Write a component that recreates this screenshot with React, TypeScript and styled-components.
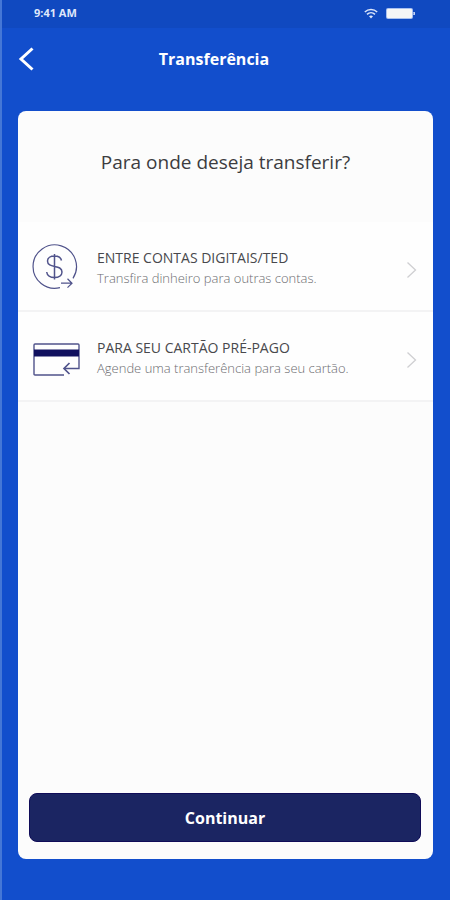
import React from "react";
import styled, { createGlobalStyle } from "styled-components";

const GlobalStyle = createGlobalStyle`
  * { box-sizing: border-box; }
  body { margin: 0; background: #124ecc; }
  button { font-family: inherit; }
`;

const Screen = styled.div`
  min-height: 100vh;
  display: flex;
  flex-direction: column;
  background: #124ecc;
  border-left: 2px solid #4577d6;
  font-family: "Open Sans", "Noto Sans", sans-serif;
`;

const StatusBar = styled.div`
  height: 28px;
  padding: 0 35px 2px 32px;
  display: flex;
  align-items: center;
  justify-content: space-between;
  background: #1049c0;
  color: #dfe7fa;
  font-size: 11px;
  font-weight: 700;
  line-height: 16px;
`;

const StatusIcons = styled.div`
  display: flex;
  align-items: center;
  gap: 8px;
`;

const Header = styled.header`
  height: 62px;
  padding: 0 16px;
  display: grid;
  grid-template-columns: 24px 1fr 48px;
  align-items: center;
`;

const BackButton = styled.button`
  display: flex;
  padding: 0;
  border: 0;
  background: none;
  cursor: pointer;
`;

const Title = styled.h1`
  margin: 0;
  color: #fff;
  font-size: 16px;
  font-weight: 700;
  line-height: 24px;
  text-align: center;
`;

const Card = styled.main`
  flex: 1;
  margin: 21px 17px 41px 16px;
  display: flex;
  flex-direction: column;
  border-radius: 8px;
  background: #fcfcfc;
  overflow: hidden;
`;

const Question = styled.h2`
  margin: 0;
  padding: 37px 0 46px;
  color: #3c3c40;
  font-size: 19px;
  font-weight: 400;
  line-height: 28px;
  text-align: center;
`;

const OptionRow = styled.button`
  height: 90px;
  padding: 2px 15px 0 12px;
  display: flex;
  align-items: center;
  gap: 17px;
  border: 0;
  border-bottom: 2px solid #f3f3f4;
  background: #fefefe;
  text-align: left;
  cursor: pointer;
`;

const OptionText = styled.span`
  flex: 1;
  display: flex;
  flex-direction: column;
  padding-top: 2px;
`;

const OptionTitle = styled.span`
  color: #48484c;
  font-size: 14px;
  line-height: 20px;
`;

const OptionHint = styled.span`
  color: #6c6c70;
  font-size: 13px;
  font-weight: 300;
  line-height: 20px;
`;

const Footer = styled.div`
  margin-top: auto;
  padding: 12px 12px 17px 11px;
`;

const ContinueButton = styled.button`
  width: 100%;
  height: 49px;
  border: 1px solid #100c58;
  border-radius: 8px;
  background: #1b2562;
  color: #fff;
  font-size: 16px;
  font-weight: 700;
  cursor: pointer;
`;

const WifiIcon = () => (
  <svg width="14" height="11" viewBox="0 0 14 11" fill="none" stroke="#dbe5fa" strokeWidth="1.5" aria-hidden="true">
    <path d="M.8 4C4.3.6 9.7.6 13.2 4M3 6.4c2.3-2.2 5.7-2.2 8 0" />
    <path d="M5 8.2c1.2-1 2.8-1 4 0L7 10.4Z" fill="#dbe5fa" stroke="none" />
  </svg>
);

const BatteryIcon = () => (
  <svg width="29" height="11" viewBox="0 0 29 11" aria-hidden="true">
    <rect width="27" height="11" rx="2" fill="#a9c0ef" />
    <rect x="1" y="1" width="25" height="9" rx="1" fill="#f6f6f6" />
    <path d="M28 4q1 1.500 0 3Z" fill="#dbe5fa" stroke="#dbe5fa" />
  </svg>
);

const BackIcon = () => (
  <svg width="20" height="24" viewBox="0 0 20 24" fill="none" stroke="#fff" strokeWidth="3" aria-hidden="true">
    <path d="M14.500 1.500 3 12l11.500 10.500" />
  </svg>
);

const MoneyIcon = () => (
  <svg width="50" height="50" viewBox="0 0 50 50" fill="none" stroke="#50538b" strokeWidth="1.200" aria-hidden="true">
    <path d="M30 45.600A21.700 21.700 0 1 1 43 36.300" />
    <path d="M31 41.200h10.500M37.500 36.800l4.500 4.400-4.500 4.400" />
    <path d="M24.500 12v25.500M31.500 18.500c-.5-2.800-3.300-4.500-7-4.500-4 0-7 1.900-7 5 0 7.800 14.500 3 14.500 11 0 3.400-3.300 5.500-7.500 5.500S17 33.400 16.700 30" strokeWidth="1.500" />
  </svg>
);

const CardIcon = () => (
  <svg width="50" height="50" viewBox="0 0 50 50" fill="none" stroke="#50538b" strokeWidth="1.400" aria-hidden="true">
    <path d="M34 43H5q-1 0-1-1V13q0-1 1-1h43q1 0 1 1v23.500H34" />
    <path d="M39.500 31 34 36.500l5.500 5.500" strokeWidth="1.700" />
    <rect x="4" y="17.500" width="45" height="7" fill="#10105e" stroke="none" />
  </svg>
);

const ChevronIcon = () => (
  <svg width="12" height="24" viewBox="0 0 12 24" fill="none" stroke="#cfcfd2" strokeWidth="1.300" aria-hidden="true">
    <path d="m1.500 7.500 8 7.500-8 7.500" />
  </svg>
);

const options = [
  { icon: <MoneyIcon />, title: "ENTRE CONTAS DIGITAIS/TED", hint: "Transfira dinheiro para outras contas." },
  { icon: <CardIcon />, title: "PARA SEU CARTÃO PRÉ-PAGO", hint: "Agende uma transferência para seu cartão." },
];

export default function App() {
  return (
    <>
      <GlobalStyle />
      <Screen>
        <StatusBar>
          <span>9:41 AM</span>
          <StatusIcons>
            <WifiIcon />
            <BatteryIcon />
          </StatusIcons>
        </StatusBar>
        <Header>
          <BackButton aria-label="Voltar">
            <BackIcon />
          </BackButton>
          <Title>Transferência</Title>
        </Header>
        <Card>
          <Question>Para onde deseja transferir?</Question>
          {options.map((option) => (
            <OptionRow key={option.title}>
              {option.icon}
              <OptionText>
                <OptionTitle>{option.title}</OptionTitle>
                <OptionHint>{option.hint}</OptionHint>
              </OptionText>
              <ChevronIcon />
            </OptionRow>
          ))}
          <Footer>
            <ContinueButton>Continuar</ContinueButton>
          </Footer>
        </Card>
      </Screen>
    </>
  );
}
